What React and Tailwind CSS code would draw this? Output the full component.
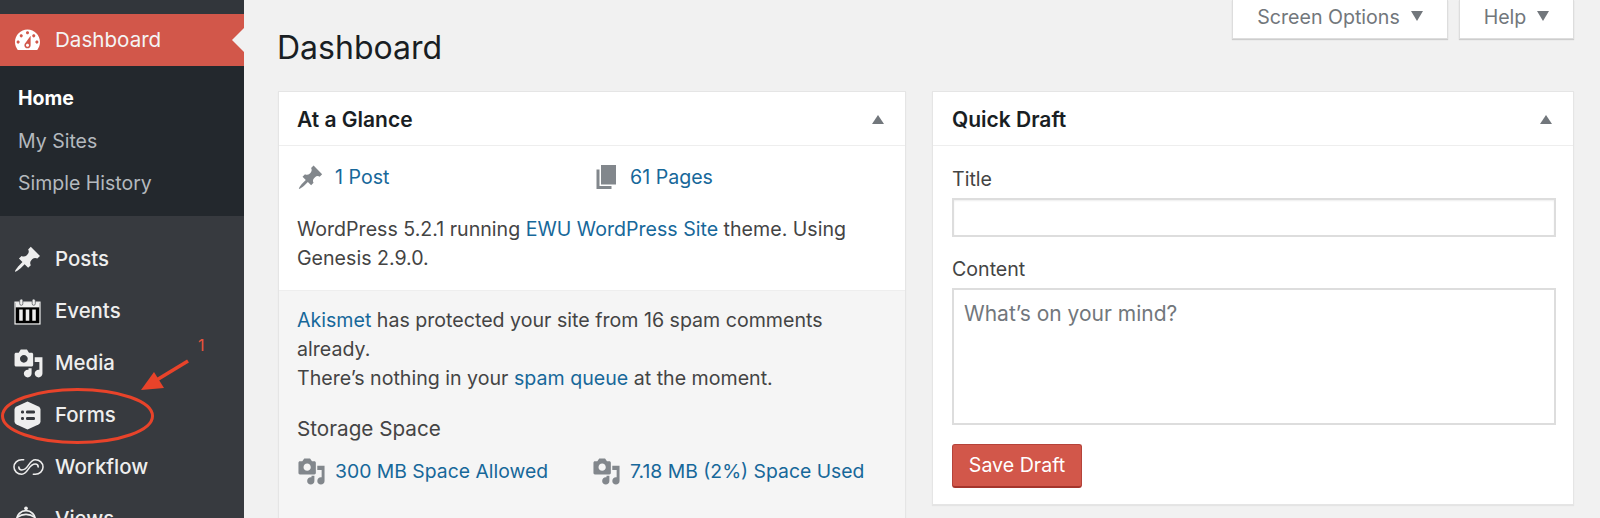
const FONT = "font-['Inter','Liberation_Sans',sans-serif]";

const Dash = ({ d, className = "", vb = "0 0 20 20" }) => (
  <svg viewBox={vb} className={className} fill="currentColor" fillRule="evenodd"><path d={d} /></svg>
);
const P = {
  dash: "M3.76 16h12.48c1.1-1.37 1.76-3.11 1.76-5 0-4.42-3.58-8-8-8s-8 3.58-8 8c0 1.89.66 3.63 1.76 5zM10 4c.55 0 1 .45 1 1s-.45 1-1 1-1-.45-1-1 .45-1 1-1zM6 6c.55 0 1 .45 1 1s-.45 1-1 1-1-.45-1-1 .45-1 1-1zm8 0c.55 0 1 .45 1 1s-.45 1-1 1-1-.45-1-1 .45-1 1-1zm-5.37 5.55L12 7v6c0 1.1-.9 2-2 2s-2-.9-2-2c0-.57.24-1.08.63-1.45zM4 10c.55 0 1 .45 1 1s-.45 1-1 1-1-.45-1-1 .45-1 1-1zm12 0c.55 0 1 .45 1 1s-.45 1-1 1-1-.45-1-1 .45-1 1-1zm-5 3c0-.55-.45-1-1-1s-1 .45-1 1 .45 1 1 1 1-.45 1-1z",
  pin: "M10.44 3.02l1.82-1.82 6.36 6.35-1.83 1.82c-1.05-.68-2.48-.57-3.41.36l-.75.75c-.92.93-1.04 2.35-.35 3.41l-1.83 1.82-2.41-2.41-2.8 2.79c-.42.42-3.38 2.71-3.8 2.29s1.86-3.39 2.28-3.81l2.79-2.79L4.1 9.36l1.83-1.82c1.05.69 2.48.57 3.41-.36l.75-.75c.93-.92 1.04-2.35.35-3.41z",
  media: "M13 11V4c0-.55-.45-1-1-1h-1.67L9 1H5L3.67 3H2c-.55 0-1 .45-1 1v7c0 .55.45 1 1 1h10c.55 0 1-.45 1-1zM7 4.5c1.38 0 2.5 1.12 2.5 2.5S8.38 9.5 7 9.5 4.5 8.38 4.5 7 5.62 4.5 7 4.5zM14 6h5v10.5c0 1.38-1.12 2.5-2.5 2.5S14 17.88 14 16.5s1.12-2.5 2.5-2.5c.17 0 .34.02.5.05V9h-3V6zm-4 8.05V13h2v3.5c0 1.38-1.12 2.5-2.5 2.5S7 17.88 7 16.5 8.12 14 9.5 14c.17 0 .34.02.5.05z",
  page: "M6 15V2h10v13H6zm-1 1h8v2H3V5h2v11z",
};

const Calendar = () => (
  <svg viewBox="0 0 26 26" className="w-[27px] h-[27px]" fill="none">
    <rect x="1" y="4" width="24" height="21" fill="#000" stroke="#eee" strokeWidth="1.2" />
    <rect x="1.5" y="4" width="23" height="5" fill="#eee" />
    <rect x="5.5" y="1" width="3" height="6" rx="1.5" fill="#eee" stroke="#373a3f" strokeWidth=".6" />
    <rect x="17.5" y="1" width="3" height="6" rx="1.5" fill="#eee" stroke="#373a3f" strokeWidth=".6" />
    <path d="M5 11h3.4v11H5zM11.3 11h3.4v11h-3.4zM17.6 11H21v11h-3.4z" fill="#eee" />
  </svg>
);
const Hexagon = () => (
  <svg viewBox="0 0 26 29" className="w-[27px] h-[29px]">
    <path d="M13 0.5 24 5.5q2 1 2 3v12q0 2-2 3L13 28.5 2 23.5q-2-1-2-3v-12q0-2 2-3Z" fill="#eee" />
    <rect x="6.5" y="9.5" width="3" height="3" rx="1.2" fill="#373a3f" />
    <rect x="6.5" y="16" width="3" height="3" rx="1.2" fill="#373a3f" />
    <rect x="11.5" y="9.5" width="9" height="3" rx="1.2" fill="#373a3f" />
    <rect x="11.5" y="16" width="9" height="3" rx="1.2" fill="#373a3f" />
  </svg>
);
const Infinity8 = () => (
  <svg viewBox="0 0 32 18" className="w-[31px] h-[18px]" fill="none" stroke="#eee" strokeWidth="1.600" strokeLinecap="round">
    <path d="M11 1.500H9C4.500 1.500 1 5 1 9s3.500 7.500 8 7.500c3 0 5-2.500 7-5.500s4-5 7-5c1.500 0 3 1 3 3" />
    <path d="M21 16.500h2c4.500 0 8-3.500 8-7.500s-3.500-7.500-8-7.500c-3 0-5 2.500-7 5.500s-4 5-7 5c-1.500 0-3-1-3-3" />
  </svg>
);
const Views = () => (
  <svg viewBox="0 0 28 28" className="w-[26px] h-[26px]" fill="none" stroke="#eee" strokeWidth="2">
    <circle cx="14" cy="2.500" r="2" fill="#eee" stroke="none" />
    <circle cx="14" cy="15" r="10" />
    <path d="M5 12c5-4 13-4 18 0" />
    <path d="M14 15l5 6" />
  </svg>
);

const MenuItem = ({ icon, label }) => (
  <div className="h-[52px] flex items-center">
    <div className="w-[55px] pl-[13px] flex items-center justify-start text-[#eee] shrink-0">{icon}</div>
    <span className="text-[20.400px] text-[#eee] font-[450] -mt-[2px]">{label}</span>
  </div>
);

const Panel = ({ title, className = "", headClass = "", children }) => (
  <section className={`bg-white border border-[#e5e5e5] shadow-[0_1px_1px_rgba(0,0,0,0.05)] flex flex-col ${className}`}>
    <div className={`h-[54px] border-b border-[#eee] flex items-center justify-between pr-[21px] shrink-0 ${headClass}`}>
      <h2 className="text-[21px] font-semibold text-[#191e23] mt-[1px]">{title}</h2>
      <span className="w-0 h-0 border-x-[6px] border-x-transparent border-b-[9px] border-b-[#72777c] mt-[1px]" />
    </div>
    {children}
  </section>
);

const A = ({ children }) => <a className="text-[#17689a]">{children}</a>;

const Tab = ({ label, className }) => (
  <div className={`h-[39px] bg-white border-x border-b border-[#ddd] shadow-[0_1px_1px_rgba(0,0,0,0.15)] flex items-center justify-center gap-[11px] text-[19.600px] text-[#72777c] ${className}`}>
    <span className="-mt-[3px]">{label}</span>
    <span className="w-0 h-0 -mt-[6px] border-x-[6px] border-x-transparent border-t-[10px] border-t-[#72777c]" />
  </div>
);

export default function App() {
  return (
    <div className={`relative w-[1600px] h-[518px] overflow-hidden flex bg-[#f1f1f1] ${FONT} text-[19.600px] leading-[29px] text-[#444]`}>
      <aside className="w-[244px] shrink-0 h-full bg-[#373a3f] flex flex-col">
        <div className="h-[14px] bg-[#32363b] shrink-0" />
        <div className="relative h-[52px] bg-[#d2574a] flex items-center shrink-0">
          <div className="w-[55px] pl-[15px] text-white"><Dash d={P.dash} className="w-[25px] h-[25px] scale-[1.25]" /></div>
          <span className="text-[20.600px] text-[#f4f4f4] -mt-[2px]">Dashboard</span>
          <span className="absolute right-0 top-[14px] w-0 h-0 border-y-[12px] border-y-transparent border-r-[12px] border-r-[#f1f1f1]" />
        </div>
        <div className="h-[150px] bg-[#23282d] pt-[11px] pl-[18px] flex flex-col shrink-0 text-[19.500px]">
          <div className="h-[43px] flex items-center font-bold text-white">Home</div>
          <div className="h-[42px] flex items-center text-[#b4b9be]">My Sites</div>
          <div className="h-[42px] flex items-center text-[#b4b9be]">Simple History</div>
        </div>
        <div className="pt-[17px]">
          <MenuItem label="Posts" icon={<Dash d={P.pin} className="w-[29px] h-[29px]" />} />
          <MenuItem label="Events" icon={<div className="ml-[1px]"><Calendar /></div>} />
          <MenuItem label="Media" icon={<Dash d={P.media} className="w-[31px] h-[31px]" />} />
          <MenuItem label="Forms" icon={<div className="ml-[1px]"><Hexagon /></div>} />
          <MenuItem label="Workflow" icon={<Infinity8 />} />
          <MenuItem label="Views" icon={<Views />} />
        </div>
      </aside>

      <main className="flex-1 min-w-0 flex flex-col pl-[33px] pr-[26px]">
        <div className="flex justify-end gap-[11px] h-[39px] shrink-0">
          <Tab label="Screen Options" className="w-[216px]" />
          <Tab label="Help" className="w-[115px]" />
        </div>
        <h1 className="text-[32px] leading-[40px] mt-[-11px] text-[#191e23] font-normal shrink-0">Dashboard</h1>
        <div className="flex gap-[26px] items-start mt-[23px]">
          <Panel title="At a Glance" headClass="pl-[18px]" className="w-[628px] ml-[1px] h-[440px] shrink-0">
            <div className="pl-[18px] pr-[18px] pt-[11px] h-[144px] shrink-0">
              <div className="grid grid-cols-[298px_1fr] h-[40px]">
                <div className="flex items-center gap-[11px]"><Dash d={P.pin} className="w-[27px] h-[27px] text-[#82878c]" /><A>1 Post</A></div>
                <div className="flex items-center gap-[8px]"><Dash d={P.page} className="w-[30px] h-[30px] -ml-[3px] text-[#82878c]" /><A>61 Pages</A></div>
              </div>
              <p className="mt-[18px] w-[570px]">WordPress 5.2.1 running <A>EWU WordPress Site</A> theme. Using Genesis 2.9.0.</p>
            </div>
            <div className="flex-1 bg-[#f5f5f5] border-t border-[#eee] pl-[18px] pr-[18px] pt-[15px]">
              <p className="w-[570px]"><A>Akismet</A> has protected your site from 16 spam comments already.<br />There’s nothing in your <A>spam queue</A> at the moment.</p>
              <h3 className="mt-[21px] text-[20.700px]">Storage Space</h3>
              <div className="grid grid-cols-[295px_1fr] mt-[14px] text-[19.350px]">
                <div className="flex items-center gap-[9px]"><Dash d={P.media} className="w-[29px] h-[29px] text-[#82878c]" /><A>300 MB Space Allowed</A></div>
                <div className="flex items-center gap-[9px]"><Dash d={P.media} className="w-[29px] h-[29px] text-[#82878c]" /><A>7.18 MB (2%) Space Used</A></div>
              </div>
            </div>
          </Panel>
          <Panel title="Quick Draft" headClass="pl-[19px]" className="flex-1 min-w-0 h-[414px]">
            <div className="pl-[19px] pr-[17px] pt-[19px] flex flex-col">
              <label className="h-[29px]">Title</label>
              <input className="mt-[4px] h-[39px] border-2 border-[#ddd] bg-white shadow-[inset_0_1px_2px_rgba(0,0,0,0.07)]" />
              <label className="mt-[18px] h-[29px]">Content</label>
              <textarea placeholder="What’s on your mind?" className="mt-[4px] h-[137px] border-2 border-[#ddd] bg-white px-[10px] py-[9px] resize-none text-[21px] placeholder:text-[#72777c] leading-[29px]" />
              <button className="mt-[19px] w-[130px] h-[44px] bg-[#d2574a] border border-[#b5433a] border-b-2 border-b-[#a5352c] rounded-[3px] text-white text-[19.600px]">Save Draft</button>
            </div>
          </Panel>
        </div>
      </main>

      <svg className="absolute left-0 top-0 pointer-events-none" width="260" height="518" fill="none">
        <ellipse cx="77.500" cy="416" rx="75" ry="26.500" stroke="#e8432a" strokeWidth="3" />
        <path d="M188 361 155 381" stroke="#e8432a" strokeWidth="3.600" />
        <path d="M141 390 154 372 164 388Z" fill="#e8432a" />
      </svg>
      <span className="absolute left-[198px] top-[331px] text-[16px] leading-[28px] text-[#e8533c]">1</span>
    </div>
  );
}
